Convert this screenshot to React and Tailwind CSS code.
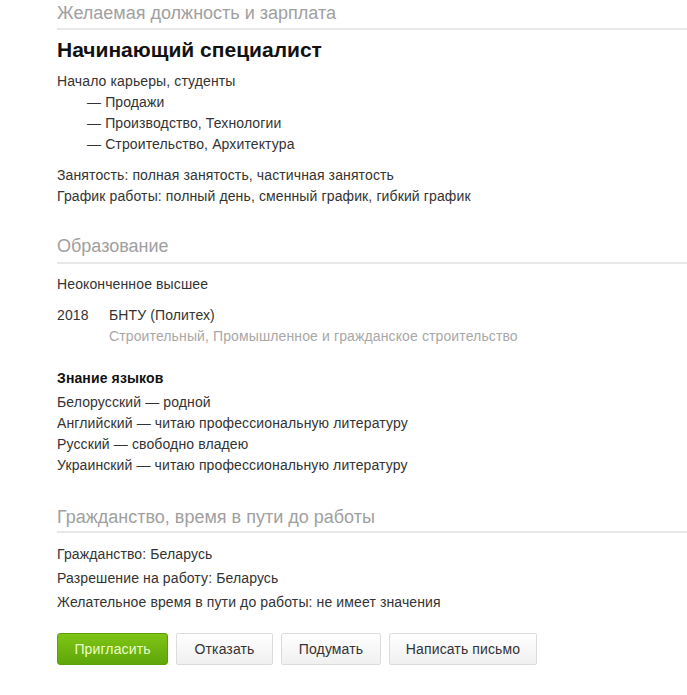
const font = { fontFamily: '"Liberation Sans", Arial, sans-serif' };

function SectionTitle({ children, className = "" }) {
  return (
    <h2 className={`border-b-2 border-[#e8e8e8] text-[18px] leading-[22px] tracking-normal text-[#a0a0a0] ${className}`}>
      {children}
    </h2>
  );
}

function Button({ children, primary, className = "" }) {
  if (primary) {
    return (
      <button className={`h-[32px] rounded-[3px] border border-[#5c9e0a] bg-gradient-to-b from-[#7fc515] to-[#5fa60a] text-[14px] text-[#eaffc8] ${className}`}>
        {children}
      </button>
    );
  }
  return (
    <button className={`h-[32px] rounded-[2px] border border-[#dcdcdc] bg-gradient-to-b from-[#ffffff] to-[#f0f0f0] text-[14px] text-[#333] ${className}`}>
      {children}
    </button>
  );
}

export default function App() {
  return (
    <div style={font} className="min-h-[695px] w-[687px] bg-white pl-[57px] pt-[2px] text-[14px] tracking-[0.12px] text-[#333]">
      <SectionTitle className="pb-[4px]">Желаемая должность и зарплата</SectionTitle>

      <div className="mt-[8px] text-[21px] font-bold leading-[24px] tracking-normal text-[#111]">Начинающий специалист</div>

      <div className="mt-[9px] leading-[21px]">
        <div>Начало карьеры, студенты</div>
        <ul className="pl-[30px]">
          <li>— Продажи</li>
          <li>— Производство, Технологии</li>
          <li>— Строительство, Архитектура</li>
        </ul>
      </div>

      <div className="mt-[10px] leading-[21px]">
        <div>Занятость: полная занятость, частичная занятость</div>
        <div>График работы: полный день, сменный график, гибкий график</div>
      </div>

      <SectionTitle className="mt-[28px] pb-[5px]">Образование</SectionTitle>

      <div className="mt-[10px] leading-[21px]">Неоконченное высшее</div>

      <div className="mt-[10px] flex leading-[21px]">
        <div className="w-[52px] shrink-0">2018</div>
        <div>
          <div>БНТУ (Политех)</div>
          <div className="text-[#a8a8a8]">Строительный, Промышленное и гражданское строительство</div>
        </div>
      </div>

      <div className="mt-[21px] font-bold leading-[21px] text-[#111]">Знание языков</div>
      <div className="mt-[3px] leading-[21px]">
        <div>Белорусский — родной</div>
        <div>Английский — читаю профессиональную литературу</div>
        <div>Русский — свободно владею</div>
        <div>Украинский — читаю профессиональную литературу</div>
      </div>

      <SectionTitle className="mt-[30px] pb-[3px]">Гражданство, время в пути до работы</SectionTitle>

      <div className="mt-[9px] leading-[24px]">
        <div>Гражданство: Беларусь</div>
        <div>Разрешение на работу: Беларусь</div>
        <div>Желательное время в пути до работы: не имеет значения</div>
      </div>

      <div className="mt-[19px] flex gap-[8px]">
        <Button primary className="w-[111px]">Пригласить</Button>
        <Button className="w-[97px]">Отказать</Button>
        <Button className="w-[100px]">Подумать</Button>
        <Button className="w-[148px]">Написать письмо</Button>
      </div>
    </div>
  );
}
